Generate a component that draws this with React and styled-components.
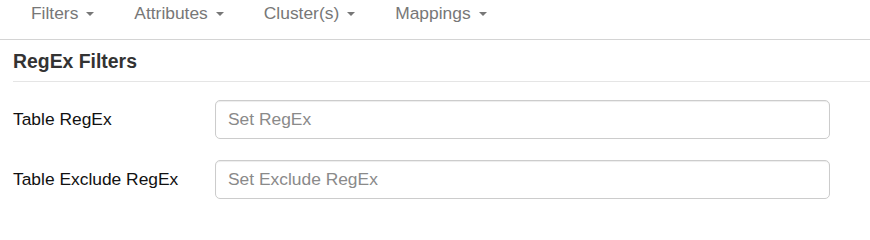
import React from 'react';
import styled, { createGlobalStyle } from 'styled-components';

const GlobalStyle = createGlobalStyle`
  html, body {
    margin: 0;
    padding: 0;
    background: #fff;
  }
  body {
    font-family: "Liberation Sans", Arial, Helvetica, sans-serif;
    color: #333;
  }
`;

const Page = styled.div`
  width: 870px;
  height: 229px;
  overflow: hidden;
`;

const NavBar = styled.ul`
  display: flex;
  margin: 0;
  padding: 0 0 0 11px;
  list-style: none;
  height: 40px;
  border-bottom: 1px solid #d4d4d4;
  box-sizing: border-box;
`;

const NavItem = styled.li`
  display: flex;
  align-items: flex-start;
  padding: 3px 20px 0;
  font-size: 17.4px;
  line-height: 20px;
  color: #777;
  cursor: pointer;
`;

const Caret = styled.span`
  display: inline-block;
  width: 0;
  height: 0;
  margin-left: 8px;
  margin-top: 9px;
  border-top: 4px solid #777;
  border-left: 4px solid transparent;
  border-right: 4px solid transparent;
`;

const Panel = styled.section`
  padding: 0 0 0 13px;
`;

const Heading = styled.h4`
  margin: 0;
  padding: 11px 0 10px;
  font-size: 19.4px;
  line-height: 20px;
  font-weight: bold;
  color: #333;
  border-bottom: 1px solid #e5e5e5;
`;

const Form = styled.form`
  display: flex;
  flex-direction: column;
  gap: 21px;
  padding-top: 18px;
`;

const Row = styled.div`
  display: grid;
  grid-template-columns: 202px 615px;
  align-items: center;
`;

const Label = styled.label`
  font-size: 17.4px;
  color: #111;
`;

const Input = styled.input`
  box-sizing: border-box;
  height: 39px;
  width: 100%;
  padding: 0 12px;
  font-family: "Liberation Sans", Arial, Helvetica, sans-serif;
  font-size: 17.4px;
  color: #555;
  border: 1px solid #ccc;
  border-radius: 5px;
  box-shadow: inset 0 1px 1px rgba(0, 0, 0, 0.075);
  outline: none;

  &::placeholder {
    color: #8a8a8a;
  }
`;

const tabs = ['Filters', 'Attributes', 'Cluster(s)', 'Mappings'];

export default function App() {
  return (
    <Page>
      <GlobalStyle />
      <NavBar>
        {tabs.map((t) => (
          <NavItem key={t}>
            {t}
            <Caret />
          </NavItem>
        ))}
      </NavBar>
      <Panel>
        <Heading>RegEx Filters</Heading>
        <Form onSubmit={(e) => e.preventDefault()}>
          <Row>
            <Label htmlFor="tableRegex">Table RegEx</Label>
            <Input id="tableRegex" type="text" placeholder="Set RegEx" />
          </Row>
          <Row>
            <Label htmlFor="tableExclude">Table Exclude RegEx</Label>
            <Input id="tableExclude" type="text" placeholder="Set Exclude RegEx" />
          </Row>
        </Form>
      </Panel>
    </Page>
  );
}
